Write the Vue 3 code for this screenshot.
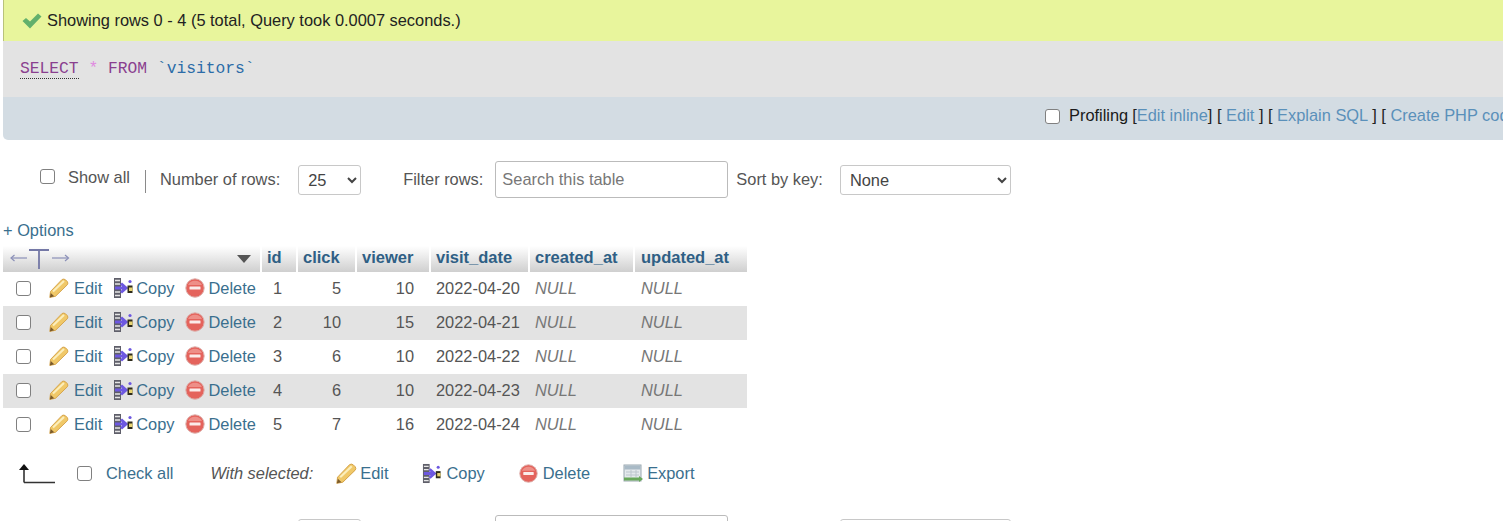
<script setup>
const rows = [
  { id: 1, click: 5, viewer: 10, date: '2022-04-20' },
  { id: 2, click: 10, viewer: 15, date: '2022-04-21' },
  { id: 3, click: 6, viewer: 10, date: '2022-04-22' },
  { id: 4, click: 6, viewer: 10, date: '2022-04-23' },
  { id: 5, click: 7, viewer: 16, date: '2022-04-24' },
]
</script>

<template>
  <div class="page">
    <div class="success">
      <svg class="check" width="20" height="16" viewBox="0 0 20 16">
        <path d="M0.5 8 L4 5 L8 8.5 L16 0.5 L19.5 3.5 L8 15.5 Z" fill="#62b06c" />
      </svg>
      <span>Showing rows 0 - 4 (5 total, Query took 0.0007 seconds.)</span>
    </div>
    <div class="sql">
      <span class="kw dotted">SELECT</span> <span class="star">*</span> <span class="kw">FROM</span> <span class="tick">`</span><span class="ident">visitors</span><span class="tick">`</span>
    </div>
    <div class="actions">
      <div class="actions-inner">
        <span class="box action-box"></span>
        <span class="profiling">Profiling</span>
        <span class="brk">[<a>Edit inline</a>] [ <a>Edit</a> ] [ <a>Explain SQL</a> ] [ <a>Create PHP code</a> ]</span>
      </div>
    </div>

    <div class="nav">
      <span class="box show-box"></span>
      <span class="show-all">Show all</span>
      <span class="sep"></span>
      <label class="lbl rows-lbl">Number of rows:</label>
      <select class="sel sel-rows"><option>25</option></select>
      <label class="lbl filter-lbl">Filter rows:</label>
      <input class="search" placeholder="Search this table" />
      <label class="lbl sort-lbl">Sort by key:</label>
      <select class="sel sel-sort"><option>None</option></select>
    </div>

    <div class="options"><a>+ Options</a></div>

    <table class="grid">
      <colgroup>
        <col class="c0" /><col class="c1" /><col class="c2" /><col class="c3" /><col class="c4" /><col class="c5" /><col class="c6" />
      </colgroup>
      <thead>
        <tr>
          <th class="th-tools">
            <div class="tools">
              <svg width="60" height="22" viewBox="0 0 60 22">
                <g fill="none" stroke="#8b90b8" stroke-width="1.2">
                  <path d="M1 10 H17" /><path d="M4.5 7 L1 10 L4.5 13" />
                  <path d="M42 10 H58" /><path d="M55 7 L58.5 10 L55 13" />
                </g>
                <path d="M19 2 H39 M29 2 V21" fill="none" stroke="#7478a6" stroke-width="1.8" />
              </svg>
              <svg class="caret" width="14" height="8" viewBox="0 0 14 8"><path d="M0 0 H14 L7 8 Z" fill="#555" /></svg>
            </div>
          </th>
          <th>id</th><th>click</th><th>viewer</th><th>visit_date</th><th>created_at</th><th>updated_at</th>
        </tr>
      </thead>
      <tbody>
        <tr v-for="r in rows" :key="r.id">
          <td class="ops">
            <div class="ops-row">
              <span class="box row-box"></span>
              <span class="op op-edit">
                <svg width="20" height="20" viewBox="0 0 20 20">
                  <path d="M1.5 13.5 L13 1.5 Q15 0.5 16.5 1.8 L18.3 3.6 Q19.5 5 18.3 6.8 L6.5 18.3 L0.8 19.4 Z" fill="#f0c868" stroke="#d29f45" stroke-width="0.9" />
                  <path d="M4 13.5 L15 3" stroke="#fbeebc" stroke-width="2" />
                  <path d="M0.8 19.4 L1.8 15 L5.2 18.3 Z" fill="#7a5a2c" />
                </svg>
                <a>Edit</a>
              </span>
              <span class="op op-copy">
                <svg width="21" height="22" viewBox="0 0 21 22">
                  <rect x="1" y="1" width="7" height="20" fill="#5f5f6a" />
                  <path d="M2 3.5 H7 M2 7 H7 M2 15 H7 M2 18.5 H7" stroke="#e6e6e6" stroke-width="1.3" />
                  <path d="M2 11 H11 M8 6.5 L13 11 L8 15.5" fill="none" stroke="#6d58e0" stroke-width="3" />
                  <rect x="14.5" y="8.5" width="5" height="7.5" fill="#2d2a1a" />
                  <rect x="16" y="10.5" width="3.5" height="3.5" fill="#e8d472" />
                  <circle cx="17" cy="4.5" r="1.6" fill="#6d58e0" />
                </svg>
                <a>Copy</a>
              </span>
              <span class="op op-del">
                <svg width="20" height="20" viewBox="0 0 20 20">
                  <circle cx="10" cy="10" r="9.2" fill="#e4635c" stroke="#dcb0ac" stroke-width="1" />
                  <path d="M3 7 A8 8 0 0 1 17 7" fill="#ee8f88" />
                  <rect x="4.5" y="8.4" width="11" height="3.2" rx="0.5" fill="#fbecea" />
                </svg>
                <a>Delete</a>
              </span>
            </div>
          </td>
          <td class="num">{{ r.id }}</td>
          <td class="num right">{{ r.click }}</td>
          <td class="num right">{{ r.viewer }}</td>
          <td class="num">{{ r.date }}</td>
          <td class="null">NULL</td>
          <td class="null">NULL</td>
        </tr>
      </tbody>
    </table>

    <div class="bulk">
      <svg class="arrow" width="36" height="22" viewBox="0 0 36 22">
        <path d="M5 20.5 H36 M5 20.5 V7" fill="none" stroke="#333" stroke-width="1.6" />
        <path d="M0 8 L5 2 L10 8 Z" fill="#111" />
      </svg>
      <span class="box bulk-box"></span>
      <a class="checkall">Check all</a>
      <em class="with">With selected:</em>
      <span class="b-op b-edit">
        <svg width="21" height="21" viewBox="0 0 20 20">
          <path d="M1.5 13.5 L13 1.5 Q15 0.5 16.5 1.8 L18.3 3.6 Q19.5 5 18.3 6.8 L6.5 18.3 L0.8 19.4 Z" fill="#f0c868" stroke="#d29f45" stroke-width="0.9" />
          <path d="M4 13.5 L15 3" stroke="#fbeebc" stroke-width="2" />
          <path d="M0.8 19.4 L1.8 15 L5.2 18.3 Z" fill="#7a5a2c" />
        </svg>
        <a>Edit</a>
      </span>
      <span class="b-op b-copy">
        <svg width="20" height="21" viewBox="0 0 21 22">
          <rect x="1" y="1" width="7" height="20" fill="#5f5f6a" />
          <path d="M2 3.5 H7 M2 7 H7 M2 15 H7 M2 18.5 H7" stroke="#e6e6e6" stroke-width="1.3" />
          <path d="M2 11 H11 M8 6.5 L13 11 L8 15.5" fill="none" stroke="#6d58e0" stroke-width="3" />
          <rect x="14.5" y="8.5" width="5" height="7.5" fill="#2d2a1a" />
          <rect x="16" y="10.5" width="3.5" height="3.5" fill="#e8d472" />
          <circle cx="17" cy="4.5" r="1.6" fill="#6d58e0" />
        </svg>
        <a>Copy</a>
      </span>
      <span class="b-op b-del">
        <svg width="19" height="19" viewBox="0 0 20 20">
          <circle cx="10" cy="10" r="9.2" fill="#e4635c" stroke="#dcb0ac" stroke-width="1" />
          <path d="M3 7 A8 8 0 0 1 17 7" fill="#ee8f88" />
          <rect x="4.5" y="8.4" width="11" height="3.2" rx="0.5" fill="#fbecea" />
        </svg>
        <a>Delete</a>
      </span>
      <span class="b-op b-exp">
        <svg width="20" height="19" viewBox="0 0 20 19">
          <rect x="1" y="1" width="17" height="16" fill="#e4e9ec" stroke="#9aa7b0" />
          <rect x="1.5" y="1.5" width="16" height="4" fill="#a9bac6" />
          <path d="M3 8 H16 M3 11 H16 M8 6 V13 M13 6 V13" stroke="#bcc6cd" />
          <path d="M1 15 H16" stroke="#69a85b" stroke-width="3" />
          <path d="M16 12 L20 15 L16 18 Z" fill="#69a85b" />
        </svg>
        <a>Export</a>
      </span>
    </div>

    <div class="nav nav-bottom">
      <span class="box show-box"></span>
      <span class="show-all">Show all</span>
      <span class="sep"></span>
      <label class="lbl rows-lbl">Number of rows:</label>
      <select class="sel sel-rows"><option>25</option></select>
      <label class="lbl filter-lbl">Filter rows:</label>
      <input class="search" placeholder="Search this table" />
      <label class="lbl sort-lbl">Sort by key:</label>
      <select class="sel sel-sort"><option>None</option></select>
    </div>
  </div>
</template>

<style>
html, body { margin: 0; background: #fff; overflow: hidden; }
</style>

<style scoped>
.page {
  width: 1503px;
  height: 521px;
  overflow: hidden;
  font-family: "Liberation Sans", Arial, sans-serif;
  font-size: 16.4px;
  color: #444;
}
a { color: #2f6488; }

.success {
  margin-left: 3px;
  height: 41px;
  box-sizing: border-box;
  background: #e8f59c;
  border-left: 1px solid #b9c27a;
  display: flex;
  align-items: center;
  padding: 0 0 0 18px;
  color: #222;
}
.check { margin-right: 5px; margin-top: 1px; }

.sql {
  margin-left: 3px;
  height: 56px;
  box-sizing: border-box;
  background: #e3e3e3;
  padding: 18px 0 0 17px;
  font-family: "Liberation Mono", monospace;
  font-size: 16.3px;
  line-height: 20px;
  white-space: pre;
}
.kw { color: #8a3f8f; }
.dotted { border-bottom: 1px dotted #333; }
.star { color: #e089e0; }
.tick { color: #3a78a8; }
.ident { color: #2c6ca8; }

.actions {
  margin-left: 3px;
  height: 43px;
  background: #d3dce3;
  border-bottom-left-radius: 5px;
  overflow: hidden;
}
.actions-inner {
  display: flex;
  align-items: center;
  height: 36px;
  padding-left: 1042px;
  white-space: nowrap;
  width: 600px;
}
.action-box { margin-top: 2px; }
.actions a { color: #5a90ba; }
.profiling { margin-left: 9px; color: #1a1a1a; }
.brk { margin-left: 4px; color: #222; }

.box {
  display: inline-block;
  width: 13px;
  height: 13px;
  border: 1px solid #808080;
  border-radius: 3px;
  background: #fff;
  flex: none;
}

.nav {
  display: flex;
  align-items: center;
  height: 37px;
  margin-top: 21px;
  white-space: nowrap;
}
.show-box { margin-left: 40px; margin-top: -6px; }
.show-all { margin-left: 13px; margin-top: -4px; color: #555; }
.sep { width: 1px; height: 23px; background: #8a8a8a; margin-left: 15px; margin-top: 3px; }
.lbl { color: #555; }
.rows-lbl { margin-left: 14px; }
.sel {
  font-family: "Liberation Sans", Arial, sans-serif;
  font-size: 16.4px;
  color: #444;
  height: 30px;
  background: #fff;
  border: 1px solid #c8c8c8;
  border-radius: 3px;
  box-sizing: border-box;
  padding: 0 0 0 5px;
}
.sel-rows { width: 63px; margin-left: 18px; }
.filter-lbl { margin-left: 42px; }
.search {
  width: 233px;
  height: 37px;
  box-sizing: border-box;
  margin-left: 12px;
  border: 1px solid #bbb;
  border-radius: 3px;
  padding: 0 6px;
  font-family: "Liberation Sans", Arial, sans-serif;
  font-size: 16.4px;
}
.search::placeholder { color: #777; }
.sort-lbl { margin-left: 8px; }
.sel-sort { width: 171px; margin-left: 17px; }

.options {
  margin-top: 22px;
  margin-left: 3px;
  height: 26px;
  line-height: 20px;
}
.options a { color: #3a6f8e; }

.grid {
  margin-left: 3px;
  border-collapse: separate;
  border-spacing: 0;
  table-layout: fixed;
  width: 744px;
}
.c0 { width: 259px; }
.c1 { width: 36px; }
.c2 { width: 59px; }
.c3 { width: 74px; }
.c4 { width: 99px; }
.c5 { width: 105px; }
.c6 { width: 112px; }

th {
  height: 26px;
  padding: 0 0 4px 5px;
  box-sizing: border-box;
  text-align: left;
  font-size: 16.5px;
  font-weight: bold;
  color: #2f5f85;
  background: linear-gradient(#ffffff, #cfcfcf);
  border-right: 2px solid #fff;
}
th:last-child { border-right: none; padding-left: 6px; }
.th-tools { padding: 0; }
.tools { display: flex; align-items: center; justify-content: space-between; padding: 0 9px 0 7px; }

tbody tr { height: 34px; }
tbody tr:nth-child(even) td { background: #e3e3e3; }
td {
  padding: 0 0 2px 5px;
  color: #555;
  white-space: nowrap;
  box-sizing: border-box;
}
td:last-child { padding-left: 6px; }
.ops { padding: 0 0 2px; }
.ops-row { display: flex; align-items: center; }
.row-box { margin-left: 13px; }
.op { display: inline-flex; align-items: center; gap: 4px; }
.op-edit { margin-left: 18px; gap: 5px; }
.op-copy { margin-left: 11px; gap: 2px; }
.op-del { margin-left: 10px; gap: 4px; }
.ops a { color: #3a6f8e; }
.num { padding-left: 11px; }
.num:nth-child(5) { padding-left: 5px; }
.right { text-align: right; padding-right: 16px; padding-left: 0; }
.num:nth-child(4) { padding-right: 17px; }
.null { font-style: italic; color: #777; }

.bulk {
  display: flex;
  align-items: center;
  height: 32px;
  margin-top: 15px;
  white-space: nowrap;
}
.arrow { margin-left: 19px; }
.bulk-box { margin-left: 22px; }
.checkall { margin-left: 14px; color: #3a6f8e; }
.with { margin-left: 37px; color: #555; }
.b-op { display: inline-flex; align-items: center; gap: 3px; }
.b-op a { color: #3a6f8e; }
.b-edit { margin-left: 23px; }
.b-copy { margin-left: 34px; gap: 4px; }
.b-del { margin-left: 34px; gap: 5px; }
.b-exp { margin-left: 33px; gap: 4px; }

.nav-bottom { margin-top: 26px; }
</style>
